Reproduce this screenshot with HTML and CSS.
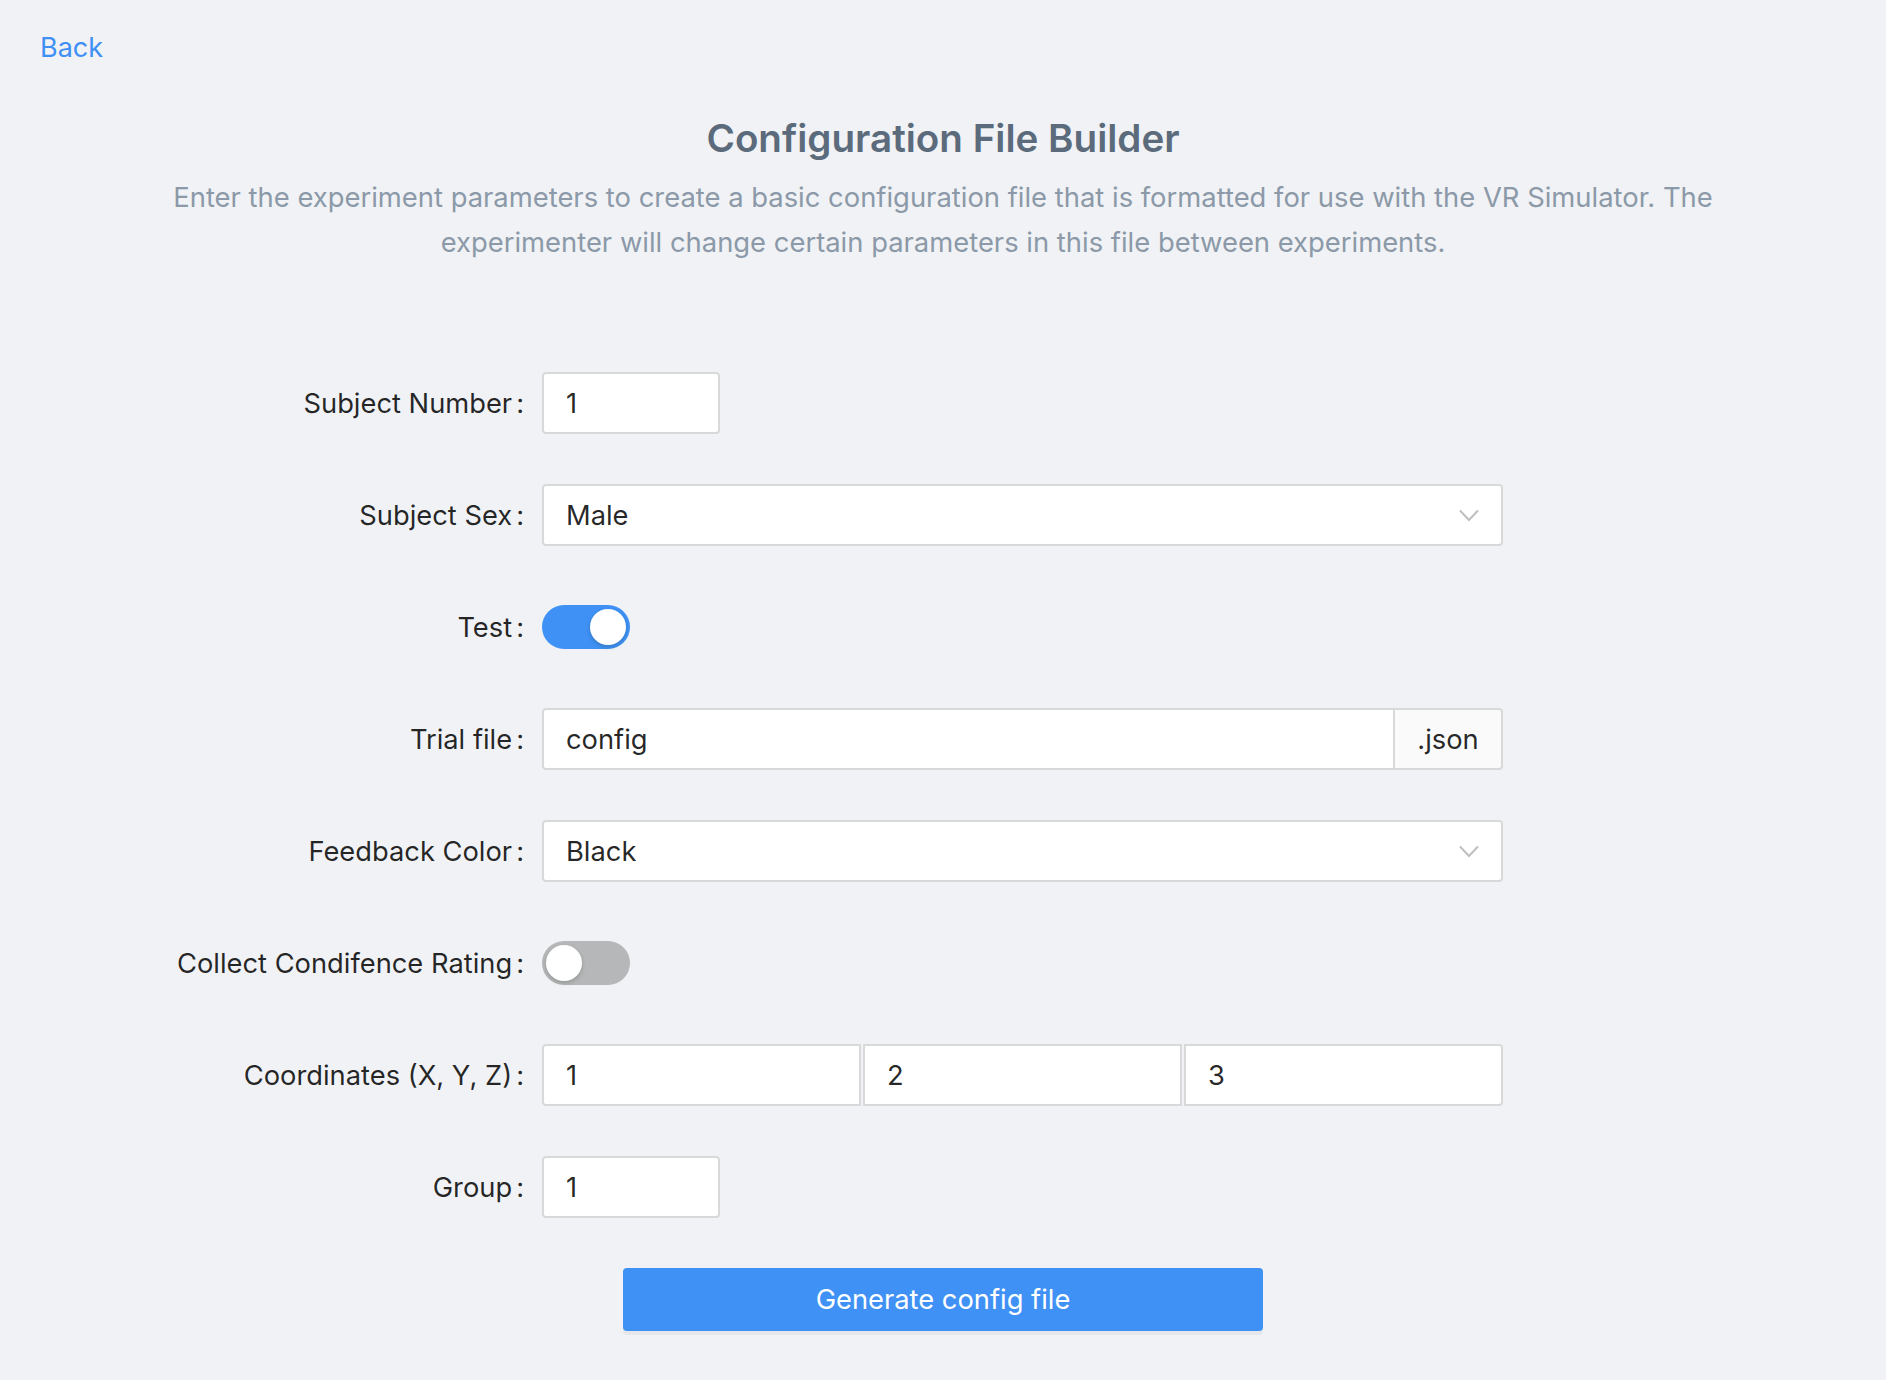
FILE: index.html
```html
<!DOCTYPE html>
<html>
<head>
<meta charset="utf-8">
<link rel="stylesheet" href="styles.css">
</head>
<body>
<div class="page">
  <a class="back" href="#">Back</a>
  <header class="intro">
    <h1 class="title">Configuration File Builder</h1>
    <p class="subtitle">Enter the experiment parameters to create a basic configuration file that is formatted for use with the VR Simulator. The experimenter will change certain parameters in this file between experiments.</p>
  </header>
  <form class="form">
    <div class="row">
      <label class="label">Subject Number</label>
      <div class="control"><div class="input short">1</div></div>
    </div>
    <div class="row">
      <label class="label">Subject Sex</label>
      <div class="control">
        <div class="input select">
          <span>Male</span>
          <svg class="chev" width="20" height="13" viewBox="0 0 20 13"><path d="M1 1.5 L10 11 L19 1.5" fill="none" stroke="#bfbfbf" stroke-width="2"/></svg>
        </div>
      </div>
    </div>
    <div class="row">
      <label class="label">Test</label>
      <div class="control"><div class="switch on"><span class="knob"></span></div></div>
    </div>
    <div class="row">
      <label class="label">Trial file</label>
      <div class="control">
        <div class="group">
          <div class="input grow">config</div>
          <div class="addon">.json</div>
        </div>
      </div>
    </div>
    <div class="row">
      <label class="label">Feedback Color</label>
      <div class="control">
        <div class="input select">
          <span>Black</span>
          <svg class="chev" width="20" height="13" viewBox="0 0 20 13"><path d="M1 1.5 L10 11 L19 1.5" fill="none" stroke="#bfbfbf" stroke-width="2"/></svg>
        </div>
      </div>
    </div>
    <div class="row">
      <label class="label">Collect Condifence Rating</label>
      <div class="control"><div class="switch off"><span class="knob"></span></div></div>
    </div>
    <div class="row">
      <label class="label">Coordinates (X, Y, Z)</label>
      <div class="control">
        <div class="triple">
          <div class="input">1</div>
          <div class="input">2</div>
          <div class="input">3</div>
        </div>
      </div>
    </div>
    <div class="row">
      <label class="label">Group</label>
      <div class="control"><div class="input short">1</div></div>
    </div>
    <div class="actions">
      <button type="button" class="btn">Generate config file</button>
    </div>
  </form>
</div>
</body>
</html>
```

FILE: styles.css
```css
html, body {
  margin: 0;
  padding: 0;
  background: #f0f2f5;
}
body {
  font-family: Inter, "Noto Sans", "Liberation Sans", sans-serif;
  color: rgba(0, 0, 0, 0.85);
  min-height: 1380px;
}
.page {
  padding: 28px 40px 0 40px;
}
.back {
  display: inline-block;
  font-size: 27px;
  line-height: 40px;
  color: #3f8ff5;
  text-decoration: none;
}
.intro {
  text-align: center;
  margin-top: 44px;
}
.title {
  margin: 0;
  font-size: 38.6px;
  line-height: 52px;
  font-weight: 600;
  color: #5b6b7c;
}
.subtitle {
  margin: 11px auto 0;
  max-width: 1600px;
  font-size: 27.4px;
  line-height: 45px;
  color: #8b99a8;
}
.form {
  margin-top: 107px;
  display: flex;
  flex-direction: column;
  gap: 50px;
}
.row {
  display: grid;
  grid-template-columns: 484px 961px;
  column-gap: 18px;
  height: 62px;
  align-items: center;
}
.label {
  text-align: right;
  font-size: 27.3px;
  color: rgba(0, 0, 0, 0.85);
}
.label::after {
  content: ":";
  margin-left: 4px;
}
.control {
  display: flex;
  align-items: center;
  height: 62px;
}
.input {
  box-sizing: border-box;
  height: 62px;
  background: #fff;
  border: 2px solid #d9d9d9;
  border-radius: 4px;
  padding: 0 22px;
  font-size: 27.3px;
  display: flex;
  align-items: center;
  color: rgba(0, 0, 0, 0.85);
}
.short { width: 178px; }
.select {
  width: 100%;
  justify-content: space-between;
}
.chev { margin-right: 0; }
.group {
  display: flex;
  width: 100%;
}
.grow {
  flex: 1;
  border-radius: 4px 0 0 4px;
}
.addon {
  box-sizing: border-box;
  height: 62px;
  width: 108px;
  background: #fafafa;
  border: 2px solid #d9d9d9;
  border-left: 0;
  border-radius: 0 4px 4px 0;
  font-size: 27.3px;
  display: flex;
  align-items: center;
  justify-content: center;
}
.triple {
  display: grid;
  grid-template-columns: 1fr 1fr 1fr;
  gap: 2px;
  width: 100%;
}
.triple .input { border-radius: 0; }
.triple .input:first-child { border-radius: 4px 0 0 4px; }
.triple .input:last-child { border-radius: 0 4px 4px 0; }
.switch {
  position: relative;
  width: 88px;
  height: 44px;
  border-radius: 22px;
  box-sizing: border-box;
}
.switch.on { background: #3f91f5; }
.switch.off { background: #b6b7b9; }
.knob {
  position: absolute;
  top: 4px;
  width: 36px;
  height: 36px;
  border-radius: 50%;
  background: #fff;
  box-shadow: 0 2px 4px rgba(0, 35, 11, 0.2);
}
.switch.on .knob { left: 48px; }
.switch.off .knob { left: 4px; }
.actions {
  display: flex;
  justify-content: center;
  margin-left: -40px;
  margin-right: -40px;
}
.btn {
  width: 640px;
  height: 63px;
  background: #3f91f5;
  color: #fff;
  border: 0;
  border-radius: 4px;
  font-family: Inter, "Noto Sans", sans-serif;
  font-size: 27.3px;
  box-shadow: 0 4px 0 rgba(0, 0, 0, 0.045);
  cursor: pointer;
}
```
